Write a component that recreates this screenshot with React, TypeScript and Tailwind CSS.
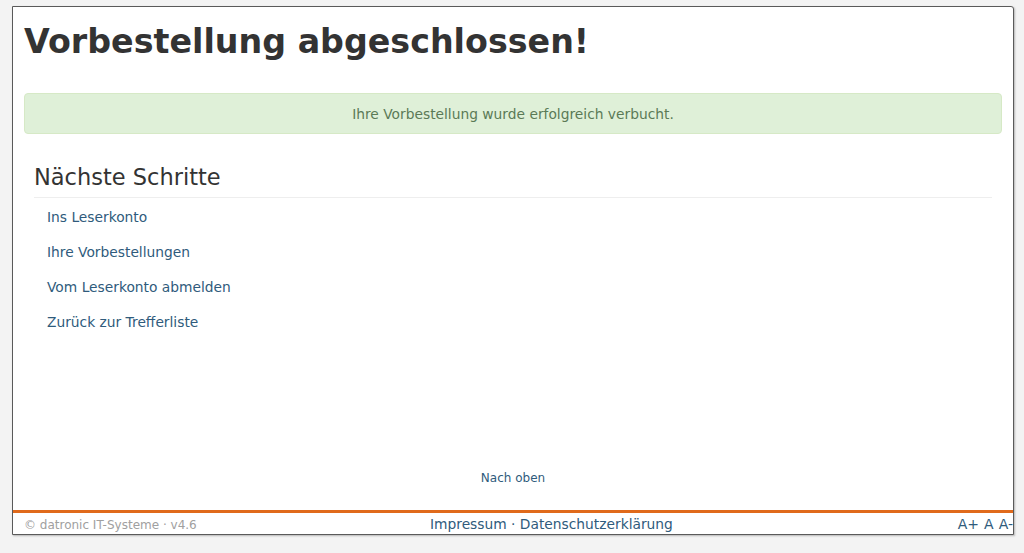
export default function App() {
  const links = [
    "Ins Leserkonto",
    "Ihre Vorbestellungen",
    "Vom Leserkonto abmelden",
    "Zurück zur Trefferliste",
  ];

  return (
    <div className="h-[553px] w-[1024px] overflow-hidden bg-[#f3f3f3] pl-[12px] pt-[6px] font-['DejaVu_Sans',Verdana,sans-serif]">
      <div className="flex h-[529px] w-[1002px] flex-col rounded-tr-[3px] border border-[#5a5a5a] bg-white shadow-[1px_1px_2px_rgba(0,0,0,0.25)]">
        <div className="flex-1 px-[11px]">
          <h1 className="mt-[15px] text-[33.3px] font-bold leading-[40px] text-[#333]">
            Vorbestellung abgeschlossen!
          </h1>
          <div className="mt-[31px] flex h-[41px] items-center justify-center rounded-[4px] border border-[#d6e9c6] bg-[#dff0d8] pt-[1px] text-[13.8px] text-[#5b7a56]">
            Ihre Vorbestellung wurde erfolgreich verbucht.
          </div>
          <div className="px-[10px]">
            <h3 className="mt-[28px] border-b border-[#eee] pb-[5px] text-[22.5px] leading-[30px] text-[#333]">
              Nächste Schritte
            </h3>
            <ul className="mt-[8px] flex flex-col gap-[13px] pl-[13px]">
              {links.map((l) => (
                <li key={l} className="leading-[22px]">
                  <a href="#" className="text-[13.8px] leading-[22px] text-[#2f5b7c]">
                    {l}
                  </a>
                </li>
              ))}
            </ul>
          </div>
        </div>
        <div className="pb-[21px] text-center">
          <a href="#" className="text-[12px] text-[#2f5b7c]">
            Nach oben
          </a>
        </div>
        <div className="flex h-[24px] items-center border-t-[3px] border-[#e06a1b] pt-[2px]">
          <div className="w-[417px] pl-[11px] text-[12px] text-[#a0a0a0]">
            © datronic IT-Systeme · v4.6
          </div>
          <div className="text-[13.8px] text-[#2f5b7c]">
            <a href="#">Impressum</a> · <a href="#">Datenschutzerklärung</a>
          </div>
          <div className="ml-auto flex gap-[5px] text-[14px] text-[#2f5b7c]">
            <a href="#">A+</a>
            <a href="#">A</a>
            <a href="#">A-</a>
          </div>
        </div>
      </div>
    </div>
  );
}
